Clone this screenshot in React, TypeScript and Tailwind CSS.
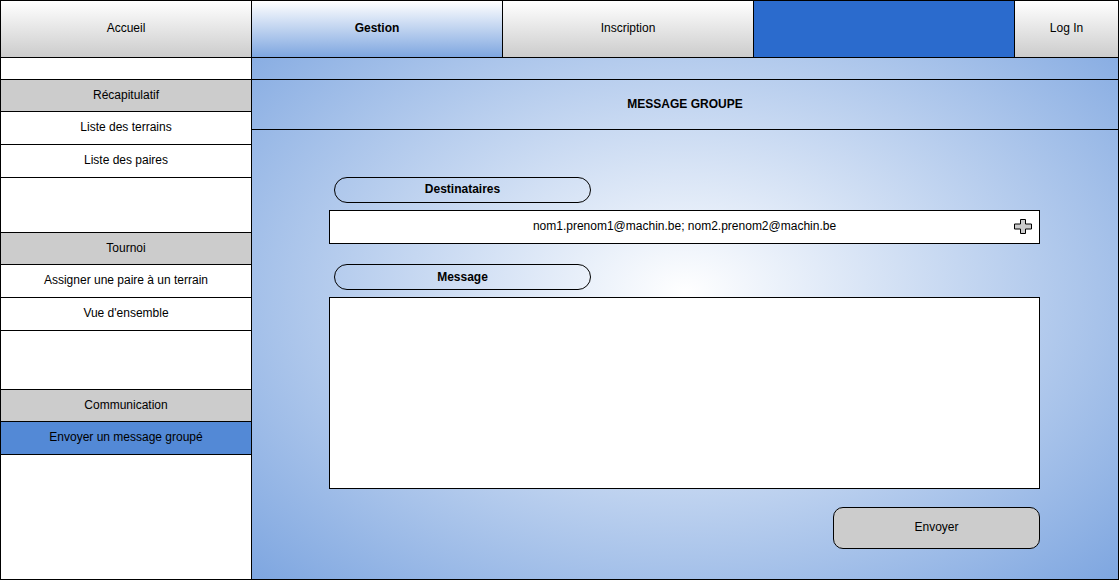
import React from "react";

const grayGrad = "bg-[linear-gradient(to_bottom,#ffffff,#cccccc)]";

function SideRow({
  h,
  label,
  kind = "item",
}: {
  h: string;
  label?: string;
  kind?: "item" | "head" | "sel" | "blank";
}) {
  const bg =
    kind === "head" ? "bg-[#cccccc]" : kind === "sel" ? "bg-[#5389d6]" : "bg-white";
  return (
    <div className={`${h} ${bg} border-b border-black flex items-center justify-center shrink-0 pb-[2px]`}>
      {label}
    </div>
  );
}

export default function App() {
  return (
    <div
      className="w-[1119px] h-[580px] border border-black flex flex-col text-[12px] text-black overflow-hidden"
      style={{ fontFamily: '"Liberation Sans", Arial, sans-serif' }}
    >
      {/* Top nav */}
      <div className="h-[57px] flex border-b border-black shrink-0">
        <div className={`w-[251px] border-r border-black flex items-center justify-center pb-[2px] ${grayGrad}`}>
          Accueil
        </div>
        <div className="w-[251px] border-r border-black flex items-center justify-center pb-[2px] font-bold bg-[linear-gradient(to_bottom,#ffffff,#7ea6e0)]">
          Gestion
        </div>
        <div className={`w-[251px] border-r border-black flex items-center justify-center pb-[2px] ${grayGrad}`}>
          Inscription
        </div>
        <div className="w-[261px] border-r border-black bg-[#2b6bcd]" />
        <div className={`flex-1 flex items-center justify-center pb-[2px] ${grayGrad}`}>Log In</div>
      </div>

      {/* Body */}
      <div className="flex flex-1 min-h-0">
        {/* Sidebar */}
        <div className="w-[251px] border-r border-black flex flex-col bg-white shrink-0">
          <SideRow h="h-[22px]" kind="blank" />
          <SideRow h="h-[32px]" kind="head" label="Récapitulatif" />
          <SideRow h="h-[33px]" label="Liste des terrains" />
          <SideRow h="h-[33px]" label="Liste des paires" />
          <SideRow h="h-[55px]" kind="blank" />
          <SideRow h="h-[32px]" kind="head" label="Tournoi" />
          <SideRow h="h-[33px]" label="Assigner une paire à un terrain" />
          <SideRow h="h-[33px]" label="Vue d'ensemble" />
          <SideRow h="h-[59px]" kind="blank" />
          <SideRow h="h-[32px]" kind="head" label="Communication" />
          <SideRow h="h-[33px]" kind="sel" label="Envoyer un message groupé" />
          <div className="flex-1" />
        </div>

        {/* Main */}
        <div className="flex-1 flex flex-col bg-[radial-gradient(ellipse_farthest-corner_at_50%_45%,#ffffff_0%,#7ea6e0_100%)]">
          <div className="h-[22px] border-b border-black shrink-0" />
          <div className="h-[50px] border-b border-black shrink-0 flex items-center justify-center font-bold pb-[2px]">
            MESSAGE GROUPE
          </div>
          <div className="flex-1 flex flex-col pl-[77px] pt-[47px]">
            <div className="ml-[5px] w-[257px] h-[26px] rounded-full border border-black flex items-center justify-center font-bold pb-[2px]">
              Destinataires
            </div>
            <div className="mt-[7px] w-[711px] h-[34px] border border-black bg-white relative flex items-center justify-center pb-[2px]">
              nom1.prenom1@machin.be; nom2.prenom2@machin.be
              <svg
                className="absolute left-[684px] top-[8px]"
                width="18"
                height="15"
                viewBox="0 0 18 15"
              >
                <path
                  d="M6.5 0.5 H11.5 V5 H17.5 V10 H11.5 V14.5 H6.5 V10 H0.5 V5 H6.5 Z"
                  fill="#cccccc"
                  stroke="#000"
                  strokeWidth="1"
                />
              </svg>
            </div>
            <div className="mt-[20px] ml-[5px] w-[257px] h-[26px] rounded-full border border-black flex items-center justify-center font-bold">
              Message
            </div>
            <div className="mt-[7px] w-[711px] h-[192px] border border-black bg-white" />
            <div className="mt-[18px] ml-[504px] w-[207px] h-[42px] rounded-[10px] border border-black bg-[#cccccc] flex items-center justify-center pb-[2px]">
              Envoyer
            </div>
          </div>
        </div>
      </div>
    </div>
  );
}
